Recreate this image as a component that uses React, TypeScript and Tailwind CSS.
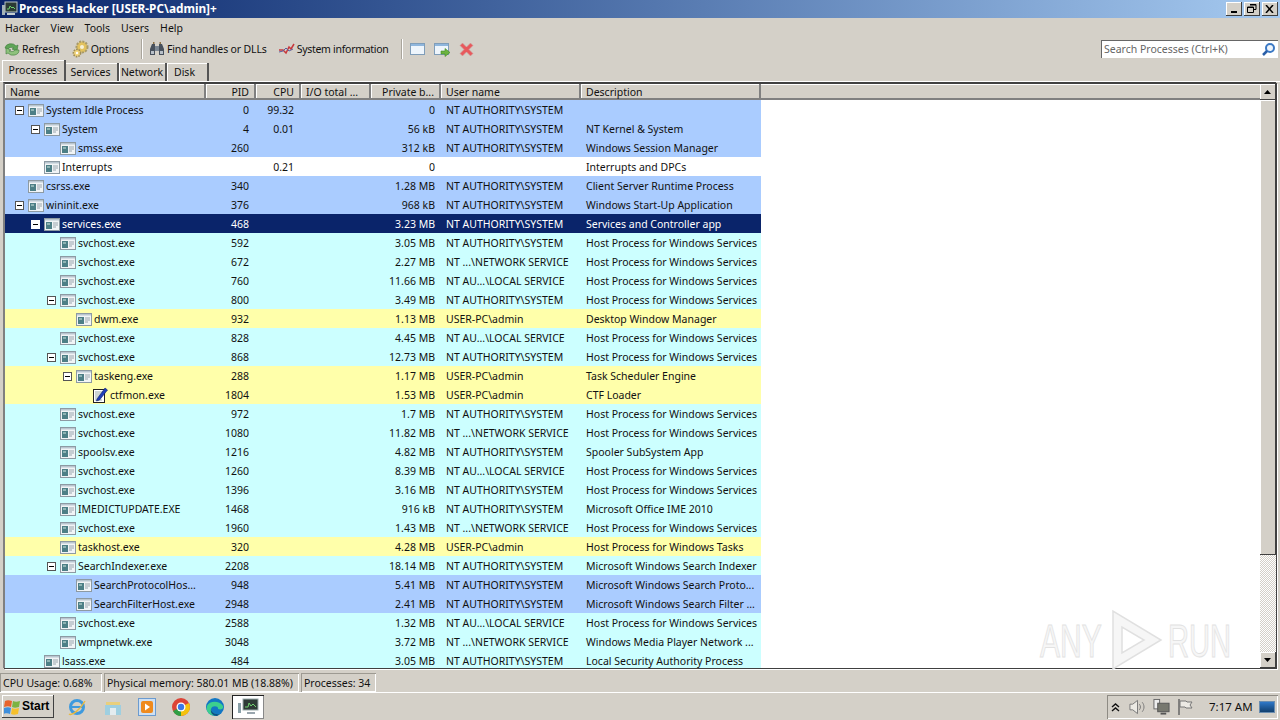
import type { ReactNode } from 'react';

type Row = {
	name: string;
	depth: number;
	pid: string;
	cpu?: string;
	priv: string;
	user: string;
	desc: string;
	tone: 'sys' | 'svc' | 'own' | 'plain' | 'sel';
	open?: boolean;
	icon?: 'note';
};

const HOST = 'Host Process for Windows Services';
const SYS = 'NT AUTHORITY\\SYSTEM';
const NET = 'NT ...\\NETWORK SERVICE';
const LOCAL = 'NT AU...\\LOCAL SERVICE';
const ME = 'USER-PC\\admin';

const rows: Row[] = [
	{ name: 'System Idle Process', depth: 0, pid: '0', cpu: '99.32', priv: '0', user: SYS, desc: '', tone: 'sys', open: true },
	{ name: 'System', depth: 1, pid: '4', cpu: '0.01', priv: '56 kB', user: SYS, desc: 'NT Kernel & System', tone: 'sys', open: true },
	{ name: 'smss.exe', depth: 2, pid: '260', priv: '312 kB', user: SYS, desc: 'Windows Session Manager', tone: 'sys' },
	{ name: 'Interrupts', depth: 1, pid: '', cpu: '0.21', priv: '0', user: '', desc: 'Interrupts and DPCs', tone: 'plain' },
	{ name: 'csrss.exe', depth: 0, pid: '340', priv: '1.28 MB', user: SYS, desc: 'Client Server Runtime Process', tone: 'sys' },
	{ name: 'wininit.exe', depth: 0, pid: '376', priv: '968 kB', user: SYS, desc: 'Windows Start-Up Application', tone: 'sys', open: true },
	{ name: 'services.exe', depth: 1, pid: '468', priv: '3.23 MB', user: SYS, desc: 'Services and Controller app', tone: 'sel', open: true },
	{ name: 'svchost.exe', depth: 2, pid: '592', priv: '3.05 MB', user: SYS, desc: HOST, tone: 'svc' },
	{ name: 'svchost.exe', depth: 2, pid: '672', priv: '2.27 MB', user: NET, desc: HOST, tone: 'svc' },
	{ name: 'svchost.exe', depth: 2, pid: '760', priv: '11.66 MB', user: LOCAL, desc: HOST, tone: 'svc' },
	{ name: 'svchost.exe', depth: 2, pid: '800', priv: '3.49 MB', user: SYS, desc: HOST, tone: 'svc', open: true },
	{ name: 'dwm.exe', depth: 3, pid: '932', priv: '1.13 MB', user: ME, desc: 'Desktop Window Manager', tone: 'own' },
	{ name: 'svchost.exe', depth: 2, pid: '828', priv: '4.45 MB', user: LOCAL, desc: HOST, tone: 'svc' },
	{ name: 'svchost.exe', depth: 2, pid: '868', priv: '12.73 MB', user: SYS, desc: HOST, tone: 'svc', open: true },
	{ name: 'taskeng.exe', depth: 3, pid: '288', priv: '1.17 MB', user: ME, desc: 'Task Scheduler Engine', tone: 'own', open: true },
	{ name: 'ctfmon.exe', depth: 4, pid: '1804', priv: '1.53 MB', user: ME, desc: 'CTF Loader', tone: 'own', icon: 'note' },
	{ name: 'svchost.exe', depth: 2, pid: '972', priv: '1.7 MB', user: SYS, desc: HOST, tone: 'svc' },
	{ name: 'svchost.exe', depth: 2, pid: '1080', priv: '11.82 MB', user: NET, desc: HOST, tone: 'svc' },
	{ name: 'spoolsv.exe', depth: 2, pid: '1216', priv: '4.82 MB', user: SYS, desc: 'Spooler SubSystem App', tone: 'svc' },
	{ name: 'svchost.exe', depth: 2, pid: '1260', priv: '8.39 MB', user: LOCAL, desc: HOST, tone: 'svc' },
	{ name: 'svchost.exe', depth: 2, pid: '1396', priv: '3.16 MB', user: SYS, desc: HOST, tone: 'svc' },
	{ name: 'IMEDICTUPDATE.EXE', depth: 2, pid: '1468', priv: '916 kB', user: SYS, desc: 'Microsoft Office IME 2010', tone: 'svc' },
	{ name: 'svchost.exe', depth: 2, pid: '1960', priv: '1.43 MB', user: NET, desc: HOST, tone: 'svc' },
	{ name: 'taskhost.exe', depth: 2, pid: '320', priv: '4.28 MB', user: ME, desc: 'Host Process for Windows Tasks', tone: 'own' },
	{ name: 'SearchIndexer.exe', depth: 2, pid: '2208', priv: '18.14 MB', user: SYS, desc: 'Microsoft Windows Search Indexer', tone: 'svc', open: true },
	{ name: 'SearchProtocolHos...', depth: 3, pid: '948', priv: '5.41 MB', user: SYS, desc: 'Microsoft Windows Search Proto...', tone: 'sys' },
	{ name: 'SearchFilterHost.exe', depth: 3, pid: '2948', priv: '2.41 MB', user: SYS, desc: 'Microsoft Windows Search Filter ...', tone: 'sys' },
	{ name: 'svchost.exe', depth: 2, pid: '2588', priv: '1.32 MB', user: LOCAL, desc: HOST, tone: 'svc' },
	{ name: 'wmpnetwk.exe', depth: 2, pid: '3048', priv: '3.72 MB', user: NET, desc: 'Windows Media Player Network ...', tone: 'svc' },
	{ name: 'lsass.exe', depth: 1, pid: '484', priv: '3.05 MB', user: SYS, desc: 'Local Security Authority Process', tone: 'svc' },
];

const toneClass = {
	sys: 'bg-[#aaccff] text-[#111]',
	svc: 'bg-[#ccffff] text-[#111]',
	own: 'bg-[#ffffaa] text-[#111]',
	plain: 'bg-white text-[#111]',
	sel: 'bg-[#0a246a] text-white',
};

const ProcessIcon = () => (
	<svg width="16" height="15" viewBox="0 0 16 15" className="shrink-0">
		<rect x="0.5" y="1.5" width="15" height="12" fill="#f1f4f6" stroke="#8d9aa3" />
		<rect x="1" y="2" width="14" height="1.5" fill="#b9c6d0" />
		<rect x="2" y="5" width="6" height="7" fill="#4d7f86" />
		<path d="M9 6h5M9 8h5M9 10h3" stroke="#9aa6ae" />
		<path d="M3 6h3v2H3z" fill="#8fb4b4" />
	</svg>
);

const NoteIcon = () => (
	<svg width="16" height="16" viewBox="0 0 16 16" className="shrink-0">
		<rect x="1.5" y="2.5" width="11" height="13" fill="#fff" stroke="#222" />
		<path d="M3 5h8M3 7h6M3 9h5M3 11h4M3 13h7" stroke="#9aa" />
		<path d="M5 12 13 1l2.500 2-8 10-3 1z" fill="#1f3fb8" stroke="#0c1c66" strokeWidth="0.6" />
	</svg>
);

const Expander = ({ selected }: { selected: boolean }) => (
	<span
		className={`flex h-[9px] w-[9px] items-center justify-center border ${selected ? 'border-white bg-white' : 'border-[#555] bg-white'}`}
	>
		<span className="h-px w-[5px] bg-black" />
	</span>
);

const ProcessRow = ({ row }: { row: Row }) => (
	<div className={`flex h-[19px] w-[756px] shrink-0 items-center pt-[1px] leading-[15px] ${toneClass[row.tone]}`}>
		<div className="flex w-[200px] items-center overflow-hidden whitespace-nowrap" style={{ paddingLeft: 10 + row.depth * 16 }}>
			<span className="flex w-[13px] shrink-0 items-center">{row.open && <Expander selected={row.tone === 'sel'} />}</span>
			{row.icon === 'note' ? <NoteIcon /> : <ProcessIcon />}
			<span className="ml-[2px]">{row.name}</span>
		</div>
		<div className="w-[50px] pr-[6px] text-right">{row.pid}</div>
		<div className="w-[45px] pr-[6px] text-right">{row.cpu}</div>
		<div className="w-[70px]" />
		<div className="w-[70px] pr-[5px] text-right whitespace-nowrap">{row.priv}</div>
		<div className="w-[140px] pl-[6px] whitespace-nowrap">{row.user}</div>
		<div className="w-[181px] overflow-hidden pl-[6px] whitespace-nowrap">{row.desc}</div>
	</div>
);

const HeaderCell = ({ width, children, right }: { width: string; children?: ReactNode; right?: boolean }) => (
	<div
		className={`flex h-full items-center border-r-2 border-r-[#808080] border-b-2 border-b-[#808080] px-[5px] pt-[2px] whitespace-nowrap shadow-[inset_1px_1px_0_#fff] ${width} ${right ? 'justify-end' : ''}`}
	>
		{children}
	</div>
);

const ArrowBtn = ({ up }: { up?: boolean }) => (
	<div className="flex h-4 w-4 shrink-0 items-center justify-center border-r border-b border-r-[#404040] border-b-[#404040] bg-[#d4d0c8] shadow-[inset_1px_1px_0_#fff]">
		<svg width="7" height="4" viewBox="0 0 7 4">
			<path d={up ? 'M3.5 0 7 4H0z' : 'M0 0h7L3.5 4z'} fill="#000" />
		</svg>
	</div>
);

const RefreshIcon = () => (
	<svg width="18" height="18" viewBox="0 0 18 18" className="shrink-0">
		<path d="M2 8a6 5 0 0 1 11-2l2-1-1 6-5-2 2-1a4 3 0 0 0-6 1z" fill="#5fa557" stroke="#3e7a3a" strokeWidth="0.6" />
		<path d="M16 10a6 5 0 0 1-11 3l-2 1 0-6 5 2-2 1a4 3 0 0 0 6-1z" fill="#8ec27c" stroke="#3e7a3a" strokeWidth="0.6" />
	</svg>
);

const GearIcon = () => (
	<svg width="18" height="18" viewBox="0 0 18 18" className="shrink-0">
		<circle cx="10" cy="7" r="5.5" fill="#e3c25e" stroke="#a89a6a" strokeDasharray="2 1.2" strokeWidth="2" />
		<circle cx="10" cy="7" r="2" fill="#f7f1d8" />
		<circle cx="5" cy="13" r="3.6" fill="#efd27a" stroke="#a08d55" strokeDasharray="1.6 1" strokeWidth="1.6" />
		<circle cx="5" cy="13" r="1.2" fill="#fff" />
	</svg>
);

const BinocularsIcon = () => (
	<svg width="16" height="16" viewBox="0 0 16 16" className="shrink-0">
		<path d="M1 8 3 3h3v11H1zM15 8l-2-5h-3v11h5z" fill="#47505c" />
		<rect x="6" y="5" width="4" height="5" fill="#7b8794" />
		<path d="M2 10h3v3H2zM11 10h3v3h-3z" fill="#b8c0c8" />
		<path d="M4 1h1.500v2H4zM10.500 1H12v2h-1.500z" fill="#8a6f45" />
	</svg>
);

const SysInfoIcon = () => (
	<svg width="17" height="14" viewBox="0 0 17 14" className="shrink-0">
		<path d="M1 8h4l3 3 3-6 2 2 3-5" fill="none" stroke="#c8383c" strokeWidth="1.5" />
		<path d="M1 10l4-1 3-3 3 3 4-2" fill="none" stroke="#5c5f9c" strokeWidth="1" />
	</svg>
);

const WindowIcon = ({ arrow }: { arrow?: boolean }) => (
	<svg width="17" height="16" viewBox="0 0 17 16" className="shrink-0">
		<rect x="0.5" y="2.5" width="14" height="11" fill="#eef5fc" stroke="#7f9db9" />
		<rect x="1" y="3" width="13" height="2" fill="#8fb6dd" />
		{arrow && <path d="M7 10h4V7.500l5 4-5 4V13H7z" fill="#6cb33f" stroke="#3f8a22" strokeWidth="0.6" />}
	</svg>
);

const RedX = () => (
	<svg width="15" height="15" viewBox="0 0 15 15" className="shrink-0">
		<path d="M1 3.500 3.500 1 7.500 5l4-4L14 3.500l-4 4 4 4-2.500 2.500-4-4-4 4L1 11.500l4-4z" fill="#e8595d" stroke="#c9a9a4" strokeWidth="0.6" />
	</svg>
);

const ToolItem = ({ icon, label, cls }: { icon: ReactNode; label: string; cls: string }) => (
	<div className="flex items-center">
		{icon}
		<span className={`whitespace-nowrap ${cls}`}>{label}</span>
	</div>
);

const CapBtn = ({ children, ml }: { children: ReactNode; ml?: string }) => (
	<div className={`flex h-[14px] w-[16px] items-center justify-center border-r border-b border-r-[#404040] border-b-[#404040] bg-[#d4d0c8] shadow-[inset_1px_1px_0_#fff] ${ml ?? ''}`}>
		{children}
	</div>
);

const Tab = ({ label, width, active }: { label: string; width: string; active?: boolean }) => (
	<div
		className={`flex items-center justify-center border-r-2 border-r-[#555] shadow-[inset_1px_1px_0_#fff] ${width} ${active ? 'relative z-10 -mr-[2px] h-[21px]' : 'h-[18px]'}`}
	>
		{label}
	</div>
);

const StatusCell = ({ width, children }: { width: string; children: ReactNode }) => (
	<div className={`flex h-[19px] items-center border-t border-l border-t-[#9d9a92] border-l-[#9d9a92] pt-[1px] pl-[2px] whitespace-nowrap shadow-[inset_-1px_-1px_0_#fff] ${width}`}>
		{children}
	</div>
);

const TaskbarIcons = () => (
	<div className="ml-[12px] flex items-center">
		<svg width="22" height="22" viewBox="0 0 22 22" className="mr-[15px]">
			<circle cx="11" cy="11" r="6.500" fill="none" stroke="#3f9ade" strokeWidth="3" />
			<path d="M6 11h10" stroke="#3f9ade" strokeWidth="2" />
			<path d="M3 18c3 2 11-4 16-13" fill="none" stroke="#e8b93f" strokeWidth="1.500" />
		</svg>
		<svg width="20" height="20" viewBox="0 0 20 20" className="mr-[14px]">
			<path d="M3 5h14v3H3z" fill="#e9cf7c" />
			<rect x="2" y="8" width="16" height="10" fill="#9fcfe0" />
			<rect x="7" y="11" width="6" height="7" fill="#e4ecef" />
		</svg>
		<svg width="20" height="22" viewBox="0 0 20 22" className="mr-[14px]">
			<rect x="1.500" y="2.500" width="17" height="17" fill="#cfe0f2" stroke="#6b9bd0" />
			<rect x="4" y="5" width="12" height="12" rx="2" fill="#ef8a1d" />
			<path d="M8 7.500 13 11l-5 3.500z" fill="#fff" />
		</svg>
		<svg width="20" height="20" viewBox="0 0 20 20" className="mr-[14px]">
			<circle cx="10" cy="10" r="9" fill="#dc4437" />
			<path d="M10 10 2 14a9 9 0 0 0 8 5z" fill="#2f9e44" />
			<path d="M10 10v9a9 9 0 0 0 8-13z" fill="#f4c20d" />
			<circle cx="10" cy="10" r="4.500" fill="#fff" />
			<circle cx="10" cy="10" r="3.200" fill="#3b78e7" />
		</svg>
		<svg width="20" height="20" viewBox="0 0 20 20" className="mr-[7px]">
			<circle cx="10" cy="10" r="9" fill="#1277c4" />
			<path d="M2 9c2-5 12-6 16 0 1 3-2 4-5 3 1-3-6-4-7 0 0 3 4 6 9 5-6 4-15 0-13-8z" fill="#3ccf8e" />
			<path d="M6 12c0 3 4 6 9 5l-3 2c-4 0-7-3-6-7z" fill="#0b4f8a" />
		</svg>
		<div className="flex h-[24px] w-[32px] items-center justify-center border-t border-l border-t-[#222] border-l-[#222] bg-white shadow-[inset_-1px_-1px_0_#888]">
			<svg width="24" height="18" viewBox="0 0 24 18">
				<rect x="6" y="1" width="15" height="11" fill="#2d3a35" stroke="#9aa" />
				<path d="M8 9h3l1-4 2 3 2-2 3 3" fill="none" stroke="#6fd16f" />
				<rect x="10" y="14" width="8" height="2" fill="#9aa6ae" />
				<rect x="1" y="5" width="3" height="10" fill="#8aa0a8" />
			</svg>
		</div>
	</div>
);

const Tray = () => (
	<div className="mr-[2px] flex h-[24px] w-[171px] items-center border-t border-l border-t-[#8e8b84] border-l-[#8e8b84] shadow-[inset_-1px_-1px_0_#fff]">
		<svg width="9" height="9" viewBox="0 0 9 9" className="ml-[3px] shrink-0">
			<path d="M1 4l3.500-3L8 4M1 8l3.500-3L8 8" fill="none" stroke="#111" strokeWidth="1.400" />
		</svg>
		<svg width="17" height="16" viewBox="0 0 18 16" className="ml-[9px] shrink-0">
			<path d="M1 5h3l5-4v14l-5-4H1z" fill="#eceae4" stroke="#777" />
			<path d="M11 5c1.500 2 1.500 4 0 6M14 3c2.500 3 2.500 7 0 10" fill="none" stroke="#777" />
		</svg>
		<svg width="17" height="18" viewBox="0 0 18 18" className="ml-[7px] shrink-0">
			<rect x="1" y="1" width="6" height="10" fill="#eee" stroke="#666" />
			<rect x="5" y="5" width="12" height="9" fill="#77786f" stroke="#555" />
			<path d="M8 16h6" stroke="#555" strokeWidth="2" />
		</svg>
		<svg width="16" height="18" viewBox="0 0 16 18" className="ml-[7px] shrink-0">
			<path d="M2 1v16" stroke="#666" strokeWidth="1.500" />
			<path d="M3 3h6l1 1h5l-2 3 2 3H9L8 9H3z" fill="#eceae4" stroke="#777" />
		</svg>
		<span className="ml-[16px] w-[44px] shrink-0 whitespace-nowrap text-[11.5px]">7:17 AM</span>
		<div className="ml-[6px] h-[12px] w-[16px] shrink-0 border border-[#6a8db0] bg-gradient-to-b from-[#2f78c8] to-[#12406f]" />
	</div>
);

const Watermark = () => (
	<div className="pointer-events-none absolute top-[607px] left-[1040px] flex h-[66px] w-[194px] items-center font-['Liberation_Sans',sans-serif] text-[47px] leading-none text-[#f6f6f6]">
		<span className="inline-block w-[64px] origin-left scale-x-[0.64] whitespace-nowrap [-webkit-text-stroke:1px_#e2e2e2]">ANY</span>
		<svg width="58" height="66" viewBox="0 0 58 66" className="mr-[2px] ml-[4px] shrink-0">
			<path d="M5 4v58l48-29zM14 20v26l22-13z" fill="#f6f6f6" fillRule="evenodd" stroke="#e0e0e0" strokeWidth="1.500" />
		</svg>
		<span className="inline-block w-[64px] origin-left scale-x-[0.62] whitespace-nowrap [-webkit-text-stroke:1px_#e2e2e2]">RUN</span>
	</div>
);

export default function App() {
	return (
		<div className="relative flex h-[720px] w-[1280px] flex-col overflow-hidden bg-[#d4d0c8] font-['Noto_Sans',sans-serif] text-[10.5px] leading-none text-[#111]">
			{/* title bar */}
			<div className="flex h-[18px] shrink-0 items-center bg-gradient-to-r from-[#0a246a] to-[#a6caf0] pr-[2px] pl-[2px]">
				<svg width="16" height="16" viewBox="0 0 16 16" className="shrink-0">
					<rect x="3" y="1" width="12" height="10" fill="#2b3a34" stroke="#b8c4c4" />
					<path d="M5 8h2l1-3 2 2 1-1 2 2" fill="none" stroke="#6fd16f" />
					<rect x="5" y="12" width="8" height="2" fill="#c5cdd0" />
					<rect x="0" y="4" width="3" height="10" fill="#a4b2b8" />
				</svg>
				<span className="ml-[1px] text-[11.8px] font-bold text-white">Process Hacker [USER-PC\admin]+</span>
				<div className="ml-auto flex items-center">
					<CapBtn><span className="mt-[6px] h-[2px] w-[6px] bg-black" /></CapBtn>
					<CapBtn ml="ml-[2px]">
						<svg width="10" height="9" viewBox="0 0 10 9"><path d="M3 .5h6v5H7M.5 3h6v5.500h-6z" fill="none" stroke="#000" /><path d="M3 1h6M1 3.500h5" stroke="#000" /></svg>
					</CapBtn>
					<CapBtn ml="ml-[2px]">
						<svg width="9" height="8" viewBox="0 0 9 8"><path d="M1 0l7 8M8 0 1 8" stroke="#000" strokeWidth="1.500" /></svg>
					</CapBtn>
				</div>
			</div>

			{/* menu */}
			<div className="flex h-[20px] shrink-0 items-center gap-[11px] pl-[5px]">
				<span>Hacker</span>
				<span>View</span>
				<span>Tools</span>
				<span>Users</span>
				<span>Help</span>
			</div>

			{/* toolbar */}
			<div className="flex h-[22px] shrink-0 items-center pl-[3px]">
				<ToolItem icon={<RefreshIcon />} label="Refresh" cls="ml-[1px]" />
				<div className="ml-[12px]"><ToolItem icon={<GearIcon />} label="Options" cls="ml-[1px] tracking-[-0.1px]" /></div>
				<div className="mr-[6px] ml-[12px] h-[20px] w-[2px] border-r border-r-white bg-[#a9a59c]" />
				<ToolItem icon={<BinocularsIcon />} label="Find handles or DLLs" cls="ml-[2px] tracking-[-0.15px]" />
				<div className="ml-[11px]"><ToolItem icon={<SysInfoIcon />} label="System information" cls="ml-[2px] tracking-[-0.28px]" /></div>
				<div className="mr-[7px] ml-[12px] h-[20px] w-[2px] border-r border-r-white bg-[#a9a59c]" />
				<WindowIcon />
				<div className="ml-[7px]"><WindowIcon arrow /></div>
				<div className="ml-[8px]"><RedX /></div>
				<div className="mr-[2px] ml-auto flex h-[18px] w-[177px] items-center border-t border-l border-t-[#666] border-l-[#666] bg-white pr-[2px] pl-[2px] text-[#666]">
					<span>Search Processes (Ctrl+K)</span>
					<svg width="15" height="15" viewBox="0 0 15 15" className="ml-auto">
						<circle cx="9" cy="6" r="4" fill="#eef5fc" stroke="#3a78c4" strokeWidth="2" />
						<path d="M6 9 2 13" stroke="#2a5fa8" strokeWidth="2.500" />
					</svg>
				</div>
			</div>

			{/* tabs */}
			<div className="flex h-[22px] shrink-0 items-end border-b border-b-white pl-[2px]">
				<Tab label="Processes" width="w-[64px]" active />
				<Tab label="Services" width="w-[55px]" />
				<Tab label="Network" width="w-[48px]" />
				<Tab label="Disk" width="w-[42px] pr-[5px]" />
			</div>

			{/* process list */}
			<div className="mr-[4px] ml-[3px] flex h-[586px] border-t-2 border-l-2 border-t-[#404040] border-l-[#808080] bg-white shadow-[1px_1px_0_#404040,2px_2px_0_#fff]">
				<div className="flex min-w-0 flex-1 flex-col overflow-hidden">
					<div className="flex h-[16px] shrink-0 bg-[#d4d0c8]">
						<HeaderCell width="w-[201px]">Name</HeaderCell>
						<HeaderCell width="w-[50px]" right>PID</HeaderCell>
						<HeaderCell width="w-[45px]" right>CPU</HeaderCell>
						<HeaderCell width="w-[70px]">I/O total ...</HeaderCell>
						<HeaderCell width="w-[70px]" right>Private b...</HeaderCell>
						<HeaderCell width="w-[140px]">User name</HeaderCell>
						<HeaderCell width="w-[180px]">Description</HeaderCell>
						<div className="flex-1 border-b-2 border-b-[#808080] shadow-[inset_0_1px_0_#fff]" />
					</div>
					{rows.map((row) => (
						<ProcessRow key={row.pid + row.name} row={row} />
					))}
				</div>
				<div className="flex w-4 shrink-0 flex-col bg-[repeating-conic-gradient(#d4d0c8_0_25%,#fff_0_50%)] bg-[length:2px_2px]">
					<ArrowBtn up />
					<div className="h-[455px] shrink-0 border-r border-b border-r-[#404040] border-b-[#404040] bg-[#d4d0c8] shadow-[inset_1px_1px_0_#fff]" />
					<div className="flex-1" />
					<ArrowBtn />
				</div>
			</div>

			{/* status bar */}
			<div className="mt-[4px] flex h-[20px] shrink-0 items-center gap-[2px]">
				<StatusCell width="w-[102px]">CPU Usage: 0.68%</StatusCell>
				<StatusCell width="w-[195px]">Physical memory: 580.01 MB (18.88%)</StatusCell>
				<StatusCell width="w-[75px]">Processes: 34</StatusCell>
			</div>

			{/* taskbar */}
			<div className="flex min-h-0 flex-1 items-center justify-between border-t border-t-white">
				<div className="flex items-center">
					<div className="ml-[2px] flex h-[23px] w-[52px] items-center border-r border-b border-r-[#404040] border-b-[#404040] shadow-[inset_1px_1px_0_#fff]">
						<svg width="17" height="17" viewBox="0 0 17 17" className="ml-[2px] shrink-0">
							<path d="M1 3c2-1 4-1 7 0l-1 6C5 8 3 8 0 9z" fill="#e8632c" />
							<path d="M9 3c2 1 4 1 7 0l-1 6c-3 1-5 1-7 0z" fill="#7cb342" />
							<path d="M0 10c3-1 5-1 7 0l-1 6c-2-1-4-1-7 0z" fill="#3f8fdc" />
							<path d="M8 10c2 1 4 1 7 0l-1 6c-3 1-5 1-7 0z" fill="#f6c02c" />
						</svg>
						<span className="ml-[1px] font-['Liberation_Sans',sans-serif] text-[12px] font-bold text-black">Start</span>
					</div>
					<TaskbarIcons />
				</div>
				<Tray />
			</div>

			<Watermark />
		</div>
	);
}
